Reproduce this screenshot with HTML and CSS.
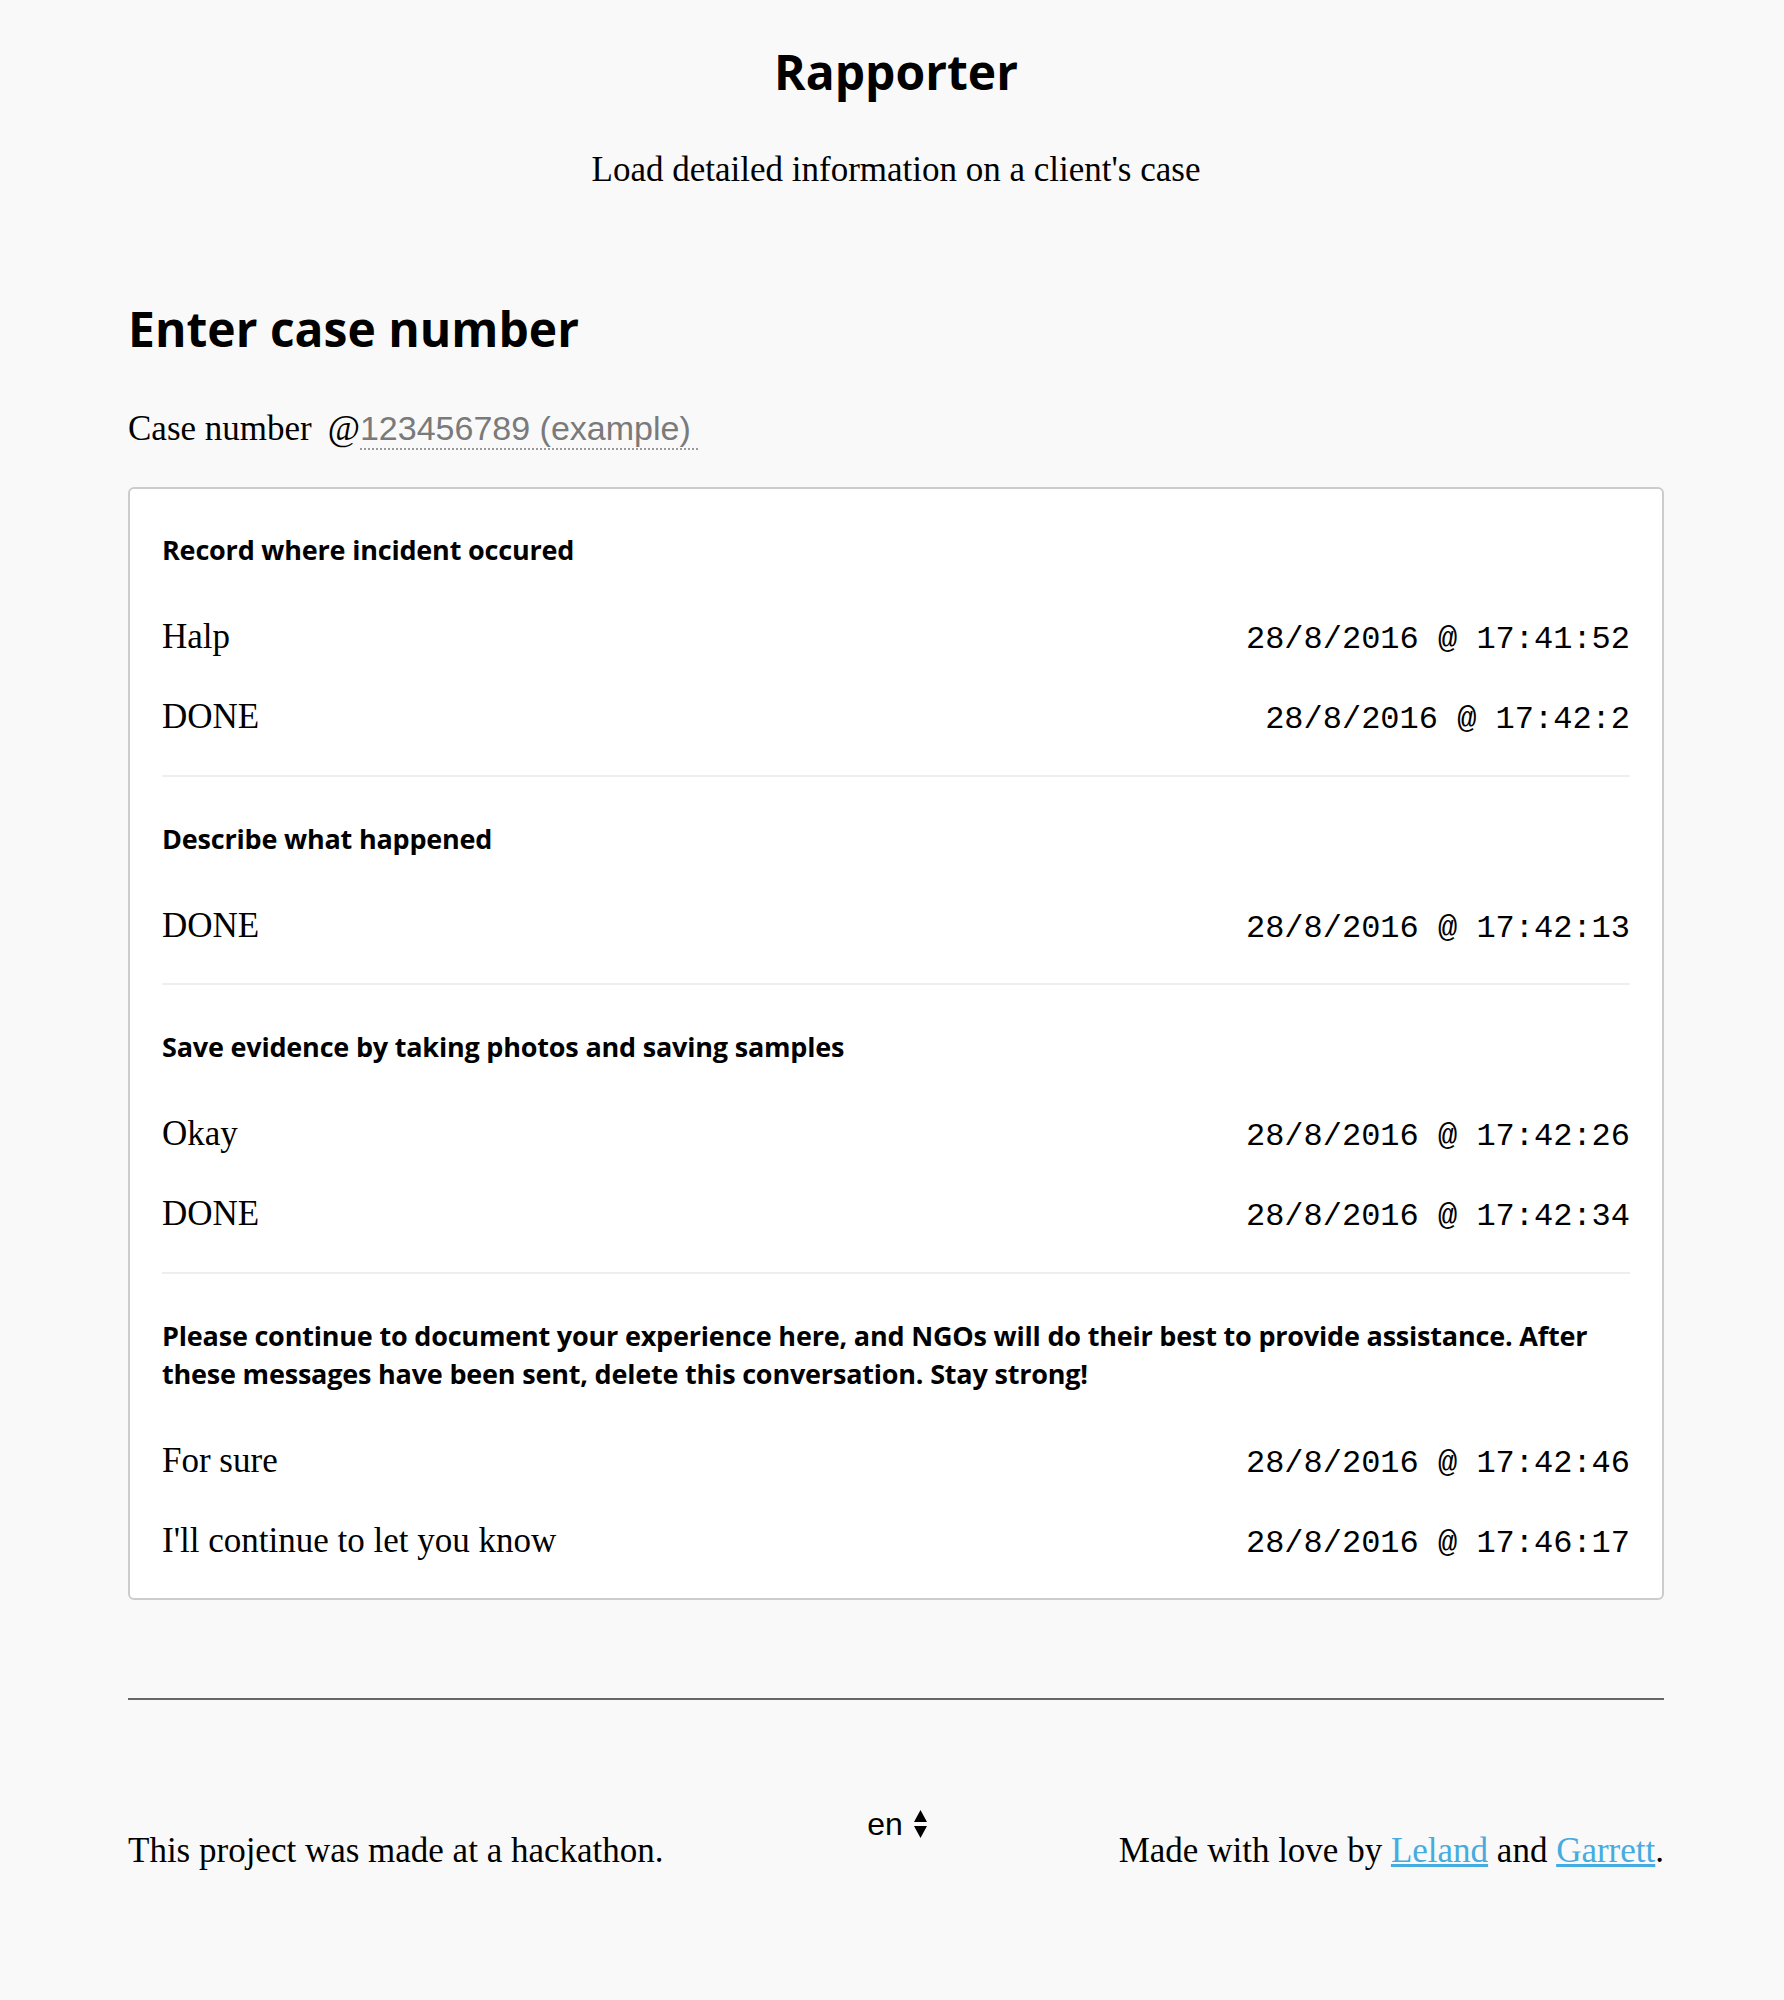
FILE: index.html
```html
<!DOCTYPE html>
<html lang="en">
<head>
<meta charset="utf-8">
<title>Rapporter</title>
<link rel="stylesheet" href="styles.css">
</head>
<body>
<div class="page">
  <header class="masthead">
    <h1 class="brand">Rapporter</h1>
    <p class="tagline">Load detailed information on a client's case</p>
  </header>

  <main class="content">
    <h2 class="section-title">Enter case number</h2>
    <div class="case-field">
      <label class="case-label" for="case">Case number</label>
      <span class="case-at">@</span>
      <input id="case" class="case-input" type="text" placeholder="123456789 (example)">
    </div>

    <div class="log-card">
      <section class="log-group">
        <h3 class="log-heading">Record where incident occured</h3>
        <div class="log-row"><span class="log-msg">Halp</span><span class="log-time">28/8/2016 @ 17:41:52</span></div>
        <div class="log-row"><span class="log-msg">DONE</span><span class="log-time">28/8/2016 @ 17:42:2</span></div>
      </section>
      <section class="log-group">
        <h3 class="log-heading">Describe what happened</h3>
        <div class="log-row"><span class="log-msg">DONE</span><span class="log-time">28/8/2016 @ 17:42:13</span></div>
      </section>
      <section class="log-group">
        <h3 class="log-heading">Save evidence by taking photos and saving samples</h3>
        <div class="log-row"><span class="log-msg">Okay</span><span class="log-time">28/8/2016 @ 17:42:26</span></div>
        <div class="log-row"><span class="log-msg">DONE</span><span class="log-time">28/8/2016 @ 17:42:34</span></div>
      </section>
      <section class="log-group">
        <h3 class="log-heading">Please continue to document your experience here, and NGOs will do their best to provide assistance. After these messages have been sent, delete this conversation. Stay strong!</h3>
        <div class="log-row"><span class="log-msg">For sure</span><span class="log-time">28/8/2016 @ 17:42:46</span></div>
        <div class="log-row"><span class="log-msg">I'll continue to let you know</span><span class="log-time">28/8/2016 @ 17:46:17</span></div>
      </section>
    </div>
  </main>

  <footer class="site-footer">
    <p class="footer-note">This project was made at a hackathon.</p>
    <div class="lang-select">
      <span class="lang-value">en</span>
      <svg class="lang-arrows" width="13" height="28" viewBox="0 0 13 28" aria-hidden="true">
        <polygon points="6.5,0 13,12 0,12" fill="#000"/>
        <polygon points="0,16 13,16 6.5,28" fill="#000"/>
      </svg>
    </div>
    <p class="footer-credit">Made with love by <a href="#">Leland</a> and <a href="#">Garrett</a>.</p>
  </footer>
</div>
</body>
</html>
```
FILE: styles.css
```css
html, body {
  margin: 0;
  background: #f9f9f9;
}

body {
  font-family: "Liberation Serif", "Times New Roman", serif;
  font-size: 35px;
  line-height: 1.5;
  color: #000;
}

.page {
  padding: 0 120px 0 128px;
}

/* header */
.masthead {
  text-align: center;
  padding-top: 39px;
}

.brand {
  margin: 0;
  font-family: "Open Sans", sans-serif;
  font-weight: 700;
  font-size: 48px;
  line-height: normal;
}

.tagline {
  margin: 40px 0 0;
}

/* case number */
.section-title {
  margin: 99px 0 0;
  font-family: "Open Sans", sans-serif;
  font-weight: 700;
  font-size: 48px;
  line-height: normal;
}

.case-field {
  margin-top: 42px;
  display: flex;
  align-items: baseline;
}

.case-label {
  margin-right: 16px;
}

.case-input {
  width: 338px;
  margin: 0;
  padding: 0;
  border: 0;
  border-bottom: 2px dotted #9a9a9a;
  background: transparent;
  font-family: "Liberation Sans", Arial, sans-serif;
  font-size: 34px;
  line-height: normal;
  color: #777;
  outline: none;
}

.case-input::placeholder {
  color: #7a7a7a;
  opacity: 1;
}

/* log card */
.log-card {
  margin-top: 32px;
  background: #fff;
  border: 2px solid #cccccc;
  border-radius: 6px;
  padding: 0 32px;
}

.log-group {
  padding: 43px 0 17.5px;
  border-bottom: 2px solid #eeeeee;
}

.log-group:first-child {
  padding-top: 42px;
}

.log-group:last-child {
  border-bottom: 0;
  padding-bottom: 17px;
}

.log-heading {
  margin: 0 0 28px;
  font-family: "Open Sans", sans-serif;
  font-weight: 700;
  font-size: 27px;
  letter-spacing: -0.2px;
  line-height: 38px;
}

.log-row {
  display: flex;
  justify-content: space-between;
  align-items: baseline;
  padding: 16px 0;
  line-height: 48px;
}

.log-time {
  font-family: "Liberation Mono", "Courier New", monospace;
  font-size: 32px;
  line-height: 40px;
  white-space: pre;
}

/* footer */
.site-footer {
  margin-top: 98px;
  border-top: 2px solid #666;
  padding-top: 106px;
  display: flex;
  justify-content: space-between;
  align-items: flex-start;
}

.footer-note,
.footer-credit {
  margin: 19px 0 0;
}

.footer-credit a {
  color: #45abe0;
  text-decoration: underline;
}

.lang-select {
  display: inline-flex;
  align-items: center;
  gap: 11px;
  margin-left: 12px;
  font-family: "Liberation Sans", Arial, sans-serif;
  font-size: 32px;
  line-height: normal;
}

.lang-arrows {
  display: block;
}
```
